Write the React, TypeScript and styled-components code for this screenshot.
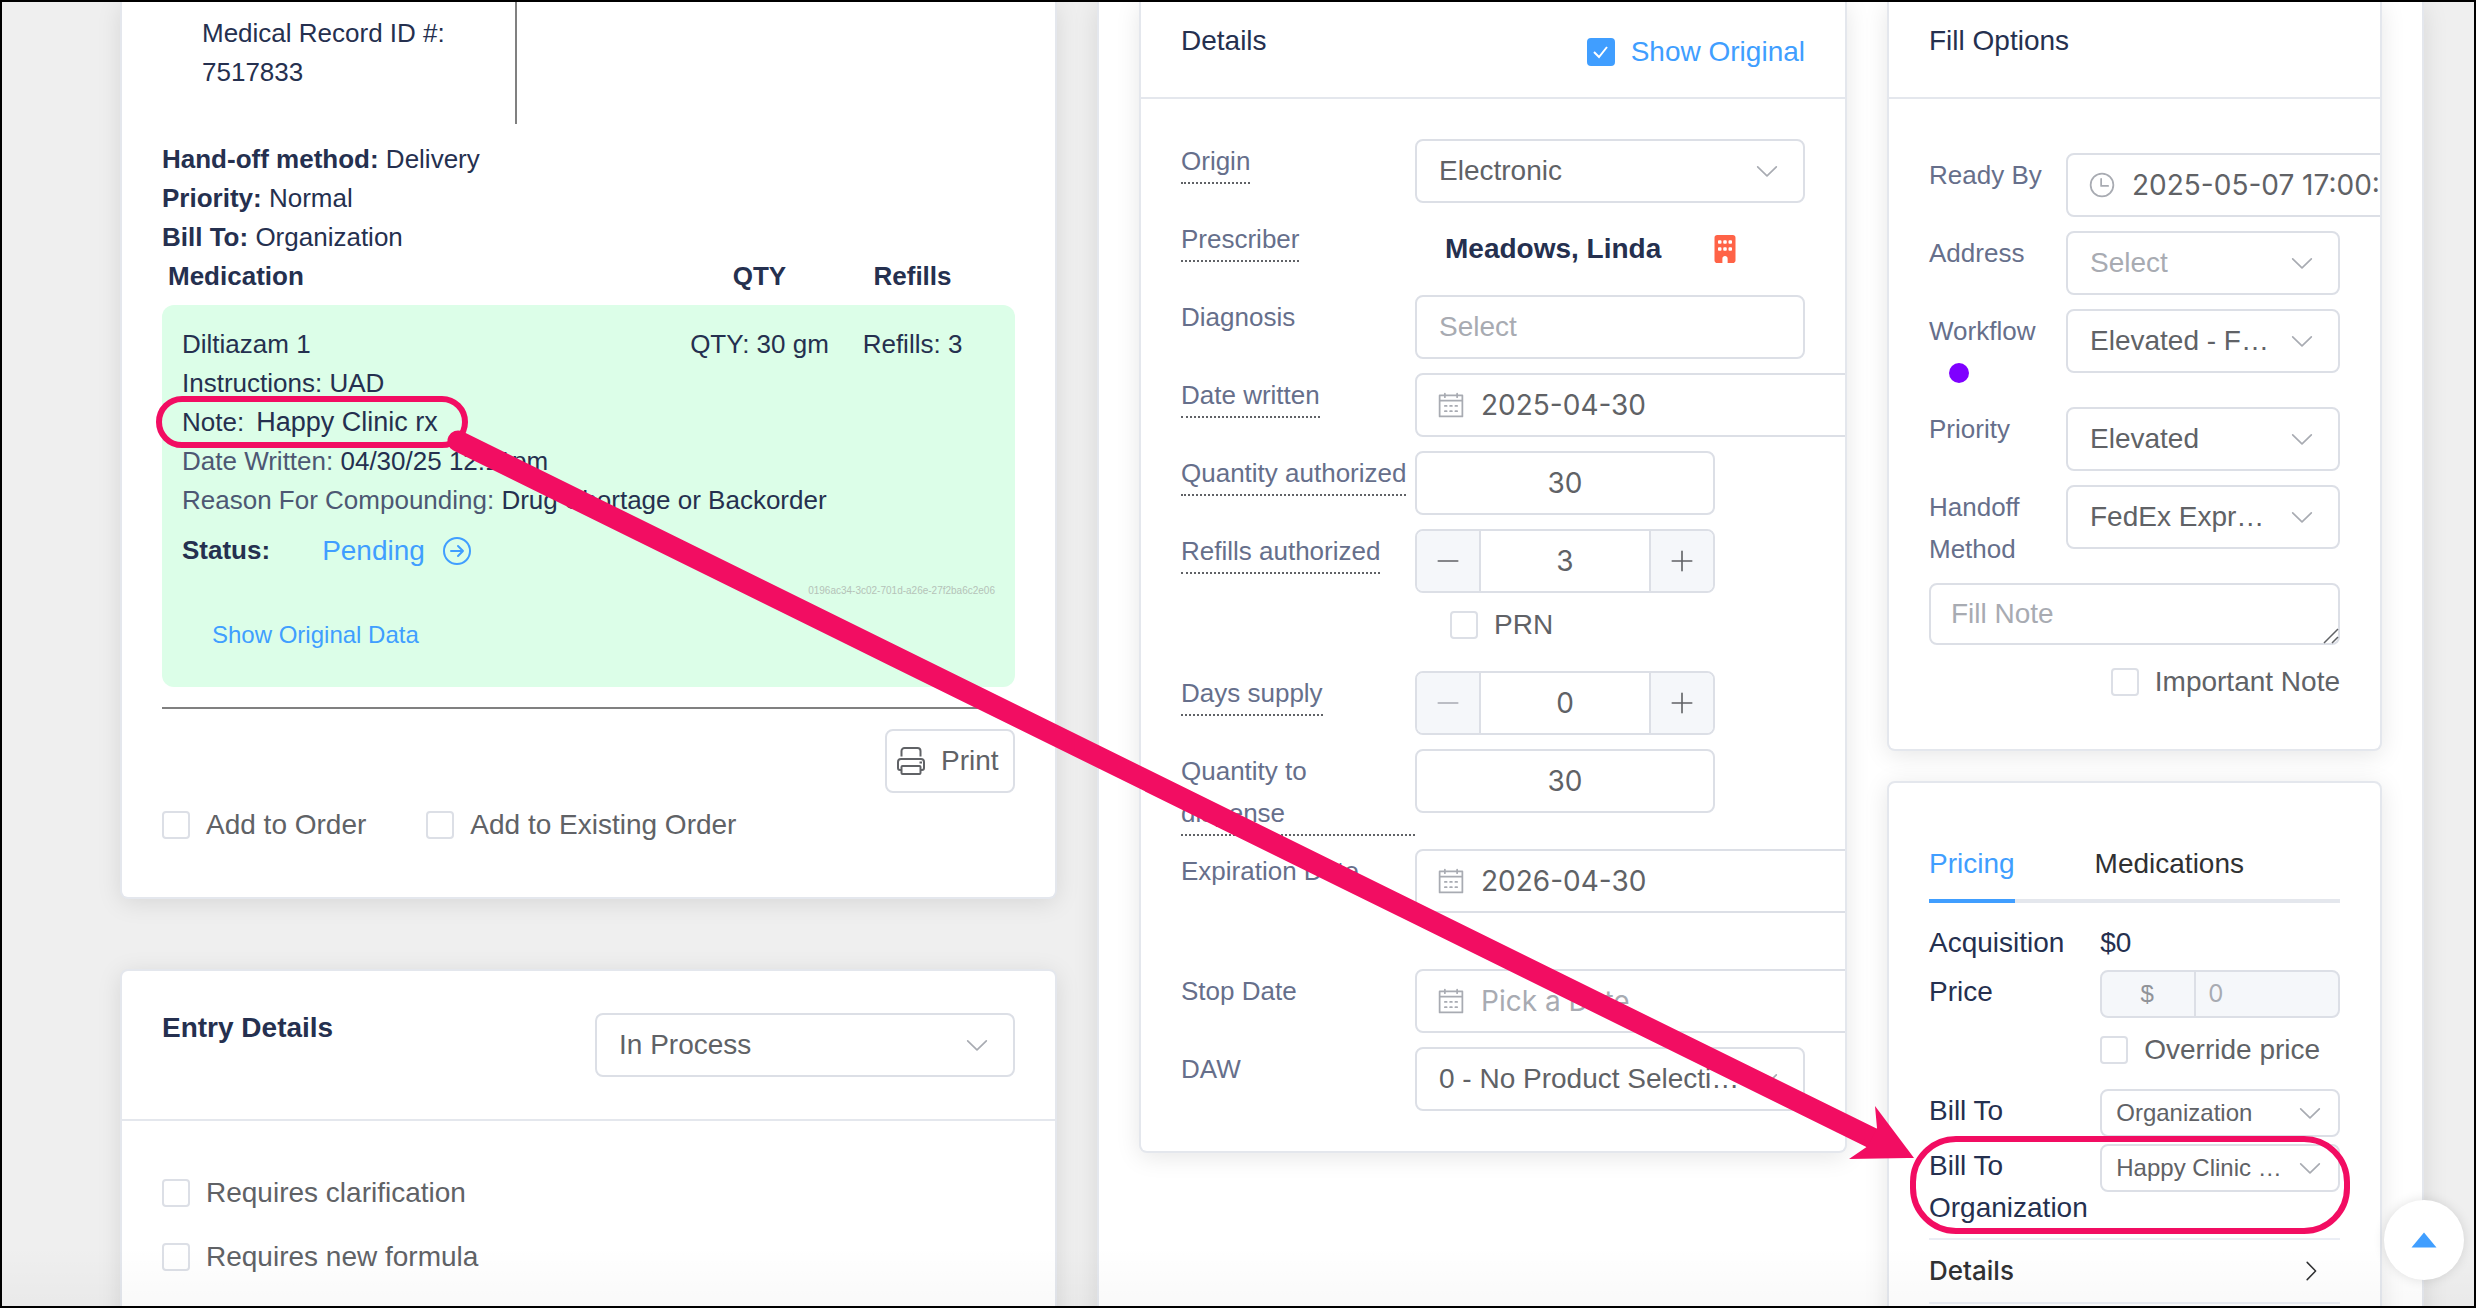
import React, { useId } from 'react';
import styled, { createGlobalStyle, css } from 'styled-components';
import { FaBuilding } from 'react-icons/fa6';

const ink = '#25304f';
const label = '#666f8b';
const text = '#606266';
const muted = '#a8abb2';
const line = '#dcdfe6';
const cardLine = '#e4e7ed';
const blue = '#409eff';
const pink = '#f20d62';
const sans = `"Liberation Sans", Arial, sans-serif`;
const system = `Inter, "Liberation Sans", sans-serif`;

const GlobalStyle = createGlobalStyle`
  *, *::before, *::after { box-sizing: border-box; }
  body { margin: 0; background: #efefef; font: 28px/42px ${sans}; color: ${ink}; }
  button, input, select, textarea { font: inherit; margin: 0; }
  h2, p { margin: 0; font-size: inherit; font-weight: inherit; }
`;

const Frame = styled.div`
  position: relative;
  height: 100vh;
  border: 2px solid #000;
  background: #efefef;
  overflow: hidden;
`;

const Columns = styled.main`
  display: grid;
  grid-template-columns: minmax(0, 937fr) minmax(0, 1327fr);
  gap: 40px;
  height: 100%;
  padding: 0 50px 0 118px;
`;

const Stack = styled.div<{ $gap: number }>`
  display: flex;
  flex-direction: column;
  gap: ${(p) => p.$gap}px;
`;

const Panel = styled.section`
  display: grid;
  grid-template-columns: minmax(0, 708fr) minmax(0, 495fr);
  align-items: start;
  gap: 40px;
  padding: 0 40px;
  background: #fff;
  border: solid ${cardLine};
  border-width: 0 2px;
  box-shadow: 0 4px 24px rgba(0, 0, 0, 0.1);
`;

const Card = styled.section<{ $cut?: boolean }>`
  flex: none;
  background: #fff;
  border: 2px solid ${cardLine};
  border-radius: 8px;
  box-shadow: 0 4px 24px rgba(0, 0, 0, 0.1);
  overflow: hidden;
  ${(p) => p.$cut && css`
    border-top: 0;
    border-top-left-radius: 0;
    border-top-right-radius: 0;
  `}
`;

const CardHead = styled.header<{ $pad: string }>`
  display: flex;
  justify-content: space-between;
  align-items: flex-start;
  padding: ${(p) => p.$pad};
  border-bottom: 2px solid ${cardLine};
`;

const Title = styled.h2<{ $bold?: boolean }>`
  && { font-weight: ${(p) => (p.$bold ? 700 : 400)}; }
`;

const CardBody = styled.div<{ $pad: string }>`
  padding: ${(p) => p.$pad};
`;

/* ---------- icons ---------- */

const paths = {
  down: 'M831.872 340.864 512 652.672 192.128 340.864a30.592 30.592 0 0 0-42.752 0 29.12 29.12 0 0 0 0 41.6L489.664 714.24a32 32 0 0 0 44.672 0l340.288-331.712a29.12 29.12 0 0 0 0-41.728 30.592 30.592 0 0 0-42.752 0z',
  right: 'M340.864 149.312a30.592 30.592 0 0 0 0 42.752L652.736 512 340.864 831.872a30.592 30.592 0 0 0 0 42.752 29.12 29.12 0 0 0 41.728 0L714.24 534.336a32 32 0 0 0 0-44.672L382.592 149.376a29.12 29.12 0 0 0-41.728 0z',
  calendar: 'M128 384v512h768V192H768v32a32 32 0 1 1-64 0v-32H320v32a32 32 0 0 1-64 0v-32H128v128h768v64H128zm192-256h384V96a32 32 0 1 1 64 0v32h160a32 32 0 0 1 32 32v768a32 32 0 0 1-32 32H96a32 32 0 0 1-32-32V160a32 32 0 0 1 32-32h160V96a32 32 0 0 1 64 0v32zm-32 384h64a32 32 0 0 1 0 64h-64a32 32 0 0 1 0-64zm0 192h64a32 32 0 1 1 0 64h-64a32 32 0 1 1 0-64zm192-192h64a32 32 0 0 1 0 64h-64a32 32 0 0 1 0-64zm0 192h64a32 32 0 1 1 0 64h-64a32 32 0 1 1 0-64zm192-192h64a32 32 0 1 1 0 64h-64a32 32 0 1 1 0-64zm0 192h64a32 32 0 1 1 0 64h-64a32 32 0 1 1 0-64z',
  clock: 'M512 896a384 384 0 1 0 0-768 384 384 0 0 0 0 768zm0 64a448 448 0 1 1 0-896 448 448 0 0 1 0 896zM480 256a32 32 0 0 1 32 32v256a32 32 0 0 1-64 0V288a32 32 0 0 1 32-32zM480 512h256q32 0 32 32t-32 32H480q-32 0-32-32t32-32z',
  caret: 'M512 320 192 704h639.936z',
  minus: 'M128 544h768a32 32 0 1 0 0-64H128a32 32 0 0 0 0 64z',
  plus: 'M480 480V128a32 32 0 0 1 64 0v352h352a32 32 0 1 1 0 64H544v352a32 32 0 1 1-64 0V544H128a32 32 0 0 1 0-64h352z',
};

const Svg = styled.svg`
  display: block;
  flex: none;
  fill: currentColor;
`;

function Glyph({ name, size = 28 }: { name: keyof typeof paths; size?: number }) {
  return (
    <Svg viewBox="0 0 1024 1024" width={size} height={size} aria-hidden="true">
      <path d={paths[name]} />
    </Svg>
  );
}

const LineSvg = styled.svg`
  display: block;
  flex: none;
  fill: none;
  stroke: currentColor;
  stroke-width: 2;
`;

const CircleArrow = () => (
  <LineSvg viewBox="0 0 28 28" width="28" height="28" strokeLinecap="round" strokeLinejoin="round" aria-hidden="true">
    <circle cx="14" cy="14" r="13" />
    <path d="M8 14h12M15 9l5 5-5 5" />
  </LineSvg>
);

const Printer = () => (
  <LineSvg viewBox="0 0 28 28" width="28" height="28" strokeLinejoin="round" aria-hidden="true">
    <path d="M4.5 9.5V4a3 3 0 0 1 3-3h13a3 3 0 0 1 3 3v5.500" />
    <path d="M4.500 23H3a2 2 0 0 1-2-2v-6a3 3 0 0 1 3-3h20a3 3 0 0 1 3 3v6a2 2 0 0 1-2 2h-1.500" />
    <rect x="4.500" y="19" width="19" height="8" rx="1" />
    <path d="M22.500 15.500h2.500" />
  </LineSvg>
);

/* ---------- controls ---------- */

const Check = styled.label<{ $on?: boolean }>`
  display: inline-flex;
  align-items: center;
  gap: 16px;
  height: 64px;
  color: ${(p) => (p.$on ? blue : text)};
  white-space: nowrap;
`;

const Tick = styled.input`
  appearance: none;
  flex: none;
  width: 28px;
  height: 28px;
  border: 2px solid ${line};
  border-radius: 4px;
  background: #fff;
  &:checked {
    border-color: ${blue};
    background: ${blue} url("data:image/svg+xml,%3Csvg xmlns='http://www.w3.org/2000/svg' viewBox='0 0 24 24' fill='none' stroke='white' stroke-width='2'%3E%3Cpath d='M5 12l5 5 8-10'/%3E%3C/svg%3E") center / 24px no-repeat;
  }
`;

function CheckBox({ children, checked }: { children: React.ReactNode; checked?: boolean }) {
  return (
    <Check $on={checked}>
      <Tick type="checkbox" defaultChecked={checked} />
      {children}
    </Check>
  );
}

const SelectWrap = styled.div<{ $small?: boolean }>`
  display: grid;
  align-items: center;
  color: ${muted};
  > * { grid-area: 1 / 1; }
  > svg {
    justify-self: end;
    margin-right: ${(p) => (p.$small ? 16 : 24)}px;
    pointer-events: none;
  }
`;

const SelectBox = styled.select<{ $small?: boolean; $empty?: boolean }>`
  appearance: none;
  width: 100%;
  height: ${(p) => (p.$small ? 48 : 64)}px;
  padding: ${(p) => (p.$small ? '0 50px 0 14px' : '0 63px 0 22px')};
  border: 2px solid ${line};
  border-radius: 8px;
  background: #fff;
  color: ${(p) => (p.$empty ? muted : text)};
  font-size: ${(p) => (p.$small ? 24 : 28)}px;
  text-overflow: ellipsis;
  white-space: nowrap;
  overflow: hidden;
`;

type SelectProps = { id?: string; value: string; small?: boolean; empty?: boolean; name?: string };

function Select({ id, value, small, empty, name }: SelectProps) {
  return (
    <SelectWrap $small={small}>
      <SelectBox id={id} $small={small} $empty={empty} aria-label={name}>
        <option>{value}</option>
      </SelectBox>
      <Glyph name="down" />
    </SelectWrap>
  );
}

const TextInput = styled.input<{ $number?: boolean }>`
  display: block;
  width: ${(p) => (p.$number ? '300px' : '100%')};
  height: 64px;
  padding: 0 22px;
  border: 2px solid ${line};
  border-radius: 8px;
  background: #fff;
  color: ${text};
  font-family: ${(p) => (p.$number ? system : sans)};
  text-align: ${(p) => (p.$number ? 'center' : 'left')};
  &::placeholder { color: ${muted}; opacity: 1; }
`;

const DateWrap = styled.div`
  display: flex;
  align-items: center;
  gap: 16px;
  width: 440px;
  height: 64px;
  padding: 0 20px;
  border: 2px solid ${line};
  border-radius: 8px;
  color: ${muted};
`;

const DateInput = styled.input`
  flex: 1;
  min-width: 0;
  padding: 0;
  border: 0;
  background: none;
  color: ${text};
  font-family: ${system};
  &::placeholder { color: ${muted}; opacity: 1; }
`;

function DateField({ id, value, icon = 'calendar' }: { id: string; value?: string; icon?: 'calendar' | 'clock' }) {
  return (
    <DateWrap>
      <Glyph name={icon} />
      <DateInput id={id} defaultValue={value} placeholder="Pick a Date" />
    </DateWrap>
  );
}

const Stepper = styled.div`
  display: flex;
  width: 300px;
  height: 64px;
  border: 2px solid ${line};
  border-radius: 8px;
  overflow: hidden;
`;

const StepButton = styled.button`
  display: grid;
  place-items: center;
  width: 62px;
  padding: 0;
  border: 0;
  background: #f5f7fa;
  color: ${text};
  &:disabled { color: ${muted}; }
`;

const StepInput = styled.input`
  flex: 1;
  min-width: 0;
  padding: 0;
  border: solid ${line};
  border-width: 0 2px;
  color: ${text};
  font-family: ${system};
  text-align: center;
`;

function NumberStepper({ id, value }: { id: string; value: number }) {
  return (
    <Stepper>
      <StepButton type="button" aria-label="Decrease" disabled={value === 0}><Glyph name="minus" size={26} /></StepButton>
      <StepInput id={id} defaultValue={value} />
      <StepButton type="button" aria-label="Increase"><Glyph name="plus" size={26} /></StepButton>
    </Stepper>
  );
}

/* ---------- form rows ---------- */

const Form = styled.form<{ $gap: number }>`
  display: flex;
  flex-direction: column;
  gap: ${(p) => p.$gap}px;
`;

const FormRow = styled.div<{ $cols: [number, number] }>`
  display: grid;
  grid-template-columns: minmax(0, ${(p) => p.$cols[0]}fr) minmax(0, ${(p) => p.$cols[1]}fr);
  align-items: start;
`;

const LabelCell = styled.div`
  display: grid;
  padding-top: 1px;
  margin-bottom: -1px;
`;

const FieldLabel = styled.label<{ $hint?: boolean; $strong?: boolean }>`
  justify-self: start;
  color: ${(p) => (p.$strong ? ink : label)};
  font-size: ${(p) => (p.$strong ? 28 : 26)}px;
  ${(p) => p.$hint && css`border-bottom: 2px dotted ${text};`}
`;

type FieldProps = {
  name: string;
  cols: [number, number];
  hint?: boolean;
  strong?: boolean;
  extra?: React.ReactNode;
  children: (id: string) => React.ReactNode;
};

function Field({ name, cols, hint, strong, extra, children }: FieldProps) {
  const id = useId();
  return (
    <FormRow $cols={cols}>
      <LabelCell>
        <FieldLabel htmlFor={id} $hint={hint} $strong={strong}>{name}</FieldLabel>
        {extra}
      </LabelCell>
      <div>{children(id)}</div>
    </FormRow>
  );
}

const Dot = styled.span`
  width: 20px;
  height: 20px;
  margin: 11px 20px;
  border-radius: 50%;
  background: #7f00ff;
`;

const Indent = styled.div`
  padding-left: 35px;
`;

const HelpSpace = styled.div`
  height: 42px;
`;

const PrescriberLine = styled.div`
  display: flex;
  justify-content: space-between;
  align-items: center;
  width: 100%;
  height: 64px;
  padding: 0 66px 0 30px;
  color: #ff6347;
`;

const PrescriberName = styled.output`
  color: ${ink};
  font-weight: 700;
`;

const NoteBox = styled.div`
  display: grid;
  color: ${text};
  > * { grid-area: 1 / 1; }
  > svg {
    place-self: end;
    margin: 0 1px 1px 0;
    pointer-events: none;
  }
`;

const NoteArea = styled.textarea`
  display: block;
  width: 100%;
  height: 62px;
  padding: 8px 20px;
  border: 2px solid ${line};
  border-radius: 8px;
  color: ${text};
  resize: none;
  overflow: hidden;
  &::placeholder { color: ${muted}; opacity: 1; }
`;

const Grip = () => (
  <LineSvg viewBox="0 0 16 16" width="16" height="16" aria-hidden="true">
    <path d="M1 15 15 1M9 15l6-6" strokeWidth="1.500" />
  </LineSvg>
);

const NoteFoot = styled.div`
  display: flex;
  justify-content: flex-end;
  padding: 5px 0;
`;

/* ---------- order summary ---------- */

const RecordBlock = styled.div`
  width: 355px;
  height: 122px;
  padding: 12px 100px 0 40px;
  border-right: 2px solid #808080;
  font-size: 26px;
  line-height: 39px;
  white-space: nowrap;
`;

const Facts = styled.div`
  margin-top: 16px;
  font-size: 26px;
  line-height: 39px;
`;

const MedTable = styled.table`
  width: 100%;
  table-layout: fixed;
  border-spacing: 0;
  font-size: 26px;
  line-height: 39px;
  td { background: #dcfee8; }
`;

const MedCell = styled.td<{ $col?: 'qty' | 'refills' }>`
  padding: 20px 0 0 20px;
  ${(p) => !p.$col && css`border-top-left-radius: 12px;`}
  ${(p) => p.$col === 'qty' && css`padding-left: 0; text-align: center;`}
  ${(p) => p.$col === 'refills' && css`
    padding: 20px 26px 0 0;
    text-align: center;
    border-top-right-radius: 12px;
  `}
`;

const MedHead = styled.th<{ $width?: number; $right?: number }>`
  width: ${(p) => (p.$width ? `${p.$width}px` : 'auto')};
  padding: 0 ${(p) => p.$right ?? 0}px 9px ${(p) => (p.$width ? 0 : 6)}px;
  text-align: ${(p) => (p.$width ? 'center' : 'left')};
`;

const MedDetail = styled.td`
  padding: 0 20px 28px;
  border-radius: 0 0 12px 12px;
`;

const Soft = styled.span`
  color: #4d5873;
`;

const NoteText = styled.span`
  margin-left: 12px;
  font-size: 27px;
`;

const StatusLine = styled.div`
  display: flex;
  align-items: center;
  gap: 52px;
  margin-top: 11px;
`;

const StatusButton = styled.button`
  display: flex;
  align-items: center;
  gap: 18px;
  padding: 0;
  border: 0;
  background: none;
  color: ${blue};
  font-size: 28px;
`;

const Uid = styled.div`
  margin-top: 11px;
  font-size: 10px;
  line-height: 20px;
  text-align: right;
  color: #b5c2b8;
`;

const TextButton = styled.button`
  display: block;
  margin-top: 10px;
  padding: 0 30px;
  border: 0;
  background: none;
  color: ${blue};
  font-size: 24px;
  line-height: 48px;
`;

const Rule = styled.hr`
  height: 2px;
  margin: 20px 0;
  border: 0;
  background: #808080;
`;

const PrintRow = styled.div`
  display: flex;
  justify-content: flex-end;
`;

const PrintButton = styled.button`
  display: flex;
  align-items: center;
  gap: 16px;
  width: 130px;
  height: 64px;
  padding: 0 10px;
  border: 2px solid ${line};
  border-radius: 8px;
  background: #fff;
  color: ${text};
`;

const CheckRow = styled.div`
  display: flex;
  gap: 60px;
`;

const StatusSelect = styled.div`
  width: 420px;
  margin: 6px 0;
`;

const CheckList = styled.div`
  display: flex;
  flex-direction: column;
  align-items: flex-start;
`;

/* ---------- pricing ---------- */

const Tabs = styled.div`
  display: flex;
  gap: 80px;
  margin-bottom: 18px;
  box-shadow: inset 0 -4px 0 ${cardLine};
`;

const Tab = styled.button<{ $active?: boolean }>`
  height: 80px;
  padding: 2px 0 0;
  border: 0;
  background: none;
  color: ${(p) => (p.$active ? blue : '#303133')};
  box-shadow: ${(p) => (p.$active ? `inset 0 -4px 0 ${blue}` : 'none')};
`;

const Amount = styled.output`
  display: block;
  padding-top: 1px;
  margin-bottom: -1px;
`;

const PriceGroup = styled.div`
  display: flex;
  height: 48px;
  border: 2px solid ${line};
  border-radius: 8px;
  background: #f5f7fa;
  overflow: hidden;
  color: ${muted};
  font-size: 24px;
`;

const Currency = styled.span`
  flex: none;
  width: 94px;
  padding-right: 2px;
  border-right: 2px solid ${line};
  line-height: 44px;
  text-align: center;
  color: #909399;
`;

const PriceInput = styled.input`
  flex: 1;
  min-width: 0;
  padding: 0 12px;
  border: 0;
  background: none;
  color: ${muted};
  font-family: ${system};
`;

const Collapse = styled.button`
  display: flex;
  justify-content: space-between;
  align-items: center;
  width: 100%;
  height: 66px;
  margin-top: 10px;
  padding: 0 16px 0 0;
  border: solid #ebeef5;
  border-width: 2px 0;
  background: none;
  color: #303133;
  && { font: 500 26px/42px ${system}; }
`;

/* ---------- overlays ---------- */

const BackTop = styled.button`
  position: fixed;
  right: 12px;
  bottom: 28px;
  display: grid;
  place-items: center;
  width: 80px;
  height: 80px;
  padding: 0;
  border: 0;
  border-radius: 50%;
  background: #fff;
  color: ${blue};
  box-shadow: 0 0 12px rgba(0, 0, 0, 0.12);
`;

const BottomShade = styled.div`
  position: absolute;
  inset: auto 0 0 0;
  height: 60px;
  background: linear-gradient(transparent, rgba(0, 0, 0, 0.025));
  pointer-events: none;
`;

const Markup = styled.svg`
  position: fixed;
  inset: 0;
  width: 100%;
  height: 100%;
  pointer-events: none;
`;

const D: [number, number] = [3, 5];
const F: [number, number] = [1, 2];
const P: [number, number] = [5, 7];

function OrderSummary() {
  return (
    <Card $cut>
      <CardBody $pad="0 40px 40px">
        <RecordBlock>
          Medical Record ID #:<br />7517833
        </RecordBlock>
        <Facts>
          <p><b>Hand-off method:</b> Delivery</p>
          <p><b>Priority:</b> Normal</p>
          <p><b>Bill To:</b> Organization</p>
        </Facts>
        <MedTable>
          <thead>
            <tr>
              <MedHead scope="col">Medication</MedHead>
              <MedHead scope="col" $width={153}>QTY</MedHead>
              <MedHead scope="col" $width={179} $right={26}>Refills</MedHead>
            </tr>
          </thead>
          <tbody>
            <tr>
              <MedCell>Diltiazam 1</MedCell>
              <MedCell $col="qty">QTY: 30 gm</MedCell>
              <MedCell $col="refills">Refills: 3</MedCell>
            </tr>
            <tr>
              <MedDetail colSpan={3}>
                <p>Instructions: UAD</p>
                <p>Note:<NoteText>Happy Clinic rx</NoteText></p>
                <p><Soft>Date Written:</Soft> 04/30/25 12:11pm</p>
                <p><Soft>Reason For Compounding:</Soft> Drug Shortage or Backorder</p>
                <StatusLine>
                  <b>Status:</b>
                  <StatusButton type="button">Pending <CircleArrow /></StatusButton>
                </StatusLine>
                <Uid>0196ac34-3c02-701d-a26e-27f2ba6c2e06</Uid>
                <TextButton type="button">Show Original Data</TextButton>
              </MedDetail>
            </tr>
          </tbody>
        </MedTable>
        <Rule />
        <PrintRow>
          <PrintButton type="button"><Printer />Print</PrintButton>
        </PrintRow>
        <CheckRow>
          <CheckBox>Add to Order</CheckBox>
          <CheckBox>Add to Existing Order</CheckBox>
        </CheckRow>
      </CardBody>
    </Card>
  );
}

function EntryDetails() {
  return (
    <Card>
      <CardHead $pad="36px 40px">
        <Title $bold>Entry Details</Title>
        <StatusSelect><Select value="In Process" name="Entry status" /></StatusSelect>
      </CardHead>
      <CardBody $pad="40px">
        <CheckList>
          <CheckBox>Requires clarification</CheckBox>
          <CheckBox>Requires new formula</CheckBox>
        </CheckList>
      </CardBody>
    </Card>
  );
}

function DetailsCard() {
  return (
    <Card $cut>
      <CardHead $pad="18px 40px 13px">
        <Title>Details</Title>
        <CheckBox checked>Show Original</CheckBox>
      </CardHead>
      <CardBody $pad="40px">
        <Form $gap={14}>
          <Field name="Origin" cols={D} hint>{(id) => <Select id={id} value="Electronic" />}</Field>
          <Field name="Prescriber" cols={D} hint>
            {(id) => (
              <PrescriberLine>
                <PrescriberName id={id}>Meadows, Linda</PrescriberName>
                <FaBuilding size={28} />
              </PrescriberLine>
            )}
          </Field>
          <Field name="Diagnosis" cols={D}>{(id) => <TextInput id={id} placeholder="Select" />}</Field>
          <Field name="Date written" cols={D} hint>{(id) => <DateField id={id} value="2025-04-30" />}</Field>
          <Field name="Quantity authorized" cols={D} hint>{(id) => <TextInput id={id} $number defaultValue="30" />}</Field>
          <Field name="Refills authorized" cols={D} hint>
            {(id) => (
              <>
                <NumberStepper id={id} value={3} />
                <Indent><CheckBox>PRN</CheckBox></Indent>
              </>
            )}
          </Field>
          <Field name="Days supply" cols={D} hint>{(id) => <NumberStepper id={id} value={0} />}</Field>
          <Field name="Quantity to dispense" cols={D} hint>{(id) => <TextInput id={id} $number defaultValue="30" />}</Field>
          <Field name="Expiration Date" cols={D}>
            {(id) => (
              <>
                <DateField id={id} value="2026-04-30" />
                <HelpSpace />
              </>
            )}
          </Field>
          <Field name="Stop Date" cols={D}>{(id) => <DateField id={id} />}</Field>
          <Field name="DAW" cols={D}>{(id) => <Select id={id} value="0 - No Product Selection Indicated" />}</Field>
        </Form>
      </CardBody>
    </Card>
  );
}

function FillOptions() {
  return (
    <Card $cut>
      <CardHead $pad="18px 40px 35px">
        <Title>Fill Options</Title>
      </CardHead>
      <CardBody $pad="54px 40px 30px">
        <Form $gap={14}>
          <Field name="Ready By" cols={F}>{(id) => <DateField id={id} icon="clock" value="2025-05-07 17:00:00" />}</Field>
          <Field name="Address" cols={F}>{(id) => <Select id={id} value="Select" empty />}</Field>
          <Field name="Workflow" cols={F} extra={<Dot />}>{(id) => <Select id={id} value="Elevated - FedEx Express" />}</Field>
          <Field name="Priority" cols={F}>{(id) => <Select id={id} value="Elevated" />}</Field>
          <Field name="Handoff Method" cols={F}>{(id) => <Select id={id} value="FedEx Express Saver" />}</Field>
          <div>
            <NoteBox>
              <NoteArea aria-label="Fill Note" placeholder="Fill Note" rows={1} />
              <Grip />
            </NoteBox>
            <NoteFoot><CheckBox>Important Note</CheckBox></NoteFoot>
          </div>
        </Form>
      </CardBody>
    </Card>
  );
}

function PricingCard() {
  return (
    <Card>
      <CardBody $pad="40px">
        <Tabs role="tablist">
          <Tab type="button" role="tab" aria-selected="true" $active>Pricing</Tab>
          <Tab type="button" role="tab" aria-selected="false">Medications</Tab>
        </Tabs>
        <Form $gap={7}>
          <Field name="Acquisition" cols={P} strong>{(id) => <Amount id={id}>$0</Amount>}</Field>
          <Field name="Price" cols={P} strong>
            {(id) => (
              <>
                <PriceGroup>
                  <Currency>$</Currency>
                  <PriceInput id={id} defaultValue="0" disabled />
                </PriceGroup>
                <CheckBox>Override price</CheckBox>
              </>
            )}
          </Field>
          <Field name="Bill To" cols={P} strong>{(id) => <Select id={id} small value="Organization" />}</Field>
          <Field name="Bill To Organization" cols={P} strong>{(id) => <Select id={id} small value="Happy Clinic Organization" />}</Field>
        </Form>
        <Collapse type="button" aria-expanded="false">Details <Glyph name="right" size={26} /></Collapse>
      </CardBody>
    </Card>
  );
}

export default function App() {
  return (
    <>
      <GlobalStyle />
      <Frame>
        <Columns>
          <Stack $gap={70}>
            <OrderSummary />
            <EntryDetails />
          </Stack>
          <Panel>
            <DetailsCard />
            <Stack $gap={30}>
              <FillOptions />
              <PricingCard />
            </Stack>
          </Panel>
        </Columns>
        <BottomShade />
        <Markup aria-hidden="true">
          <rect x="159" y="399" width="306" height="46" rx="23" fill="none" stroke={pink} strokeWidth="6" />
          <rect x="1913" y="1139" width="434" height="92" rx="43" fill="none" stroke={pink} strokeWidth="6" />
          <path d="M458 441 1880 1142" stroke={pink} strokeWidth="21" strokeLinecap="round" />
          <path d="M1914 1158 1875 1106 1877 1128 1868 1146 1849 1159Z" fill={pink} />
        </Markup>
        <BackTop type="button" aria-label="Back to top"><Glyph name="caret" size={40} /></BackTop>
      </Frame>
    </>
  );
}
